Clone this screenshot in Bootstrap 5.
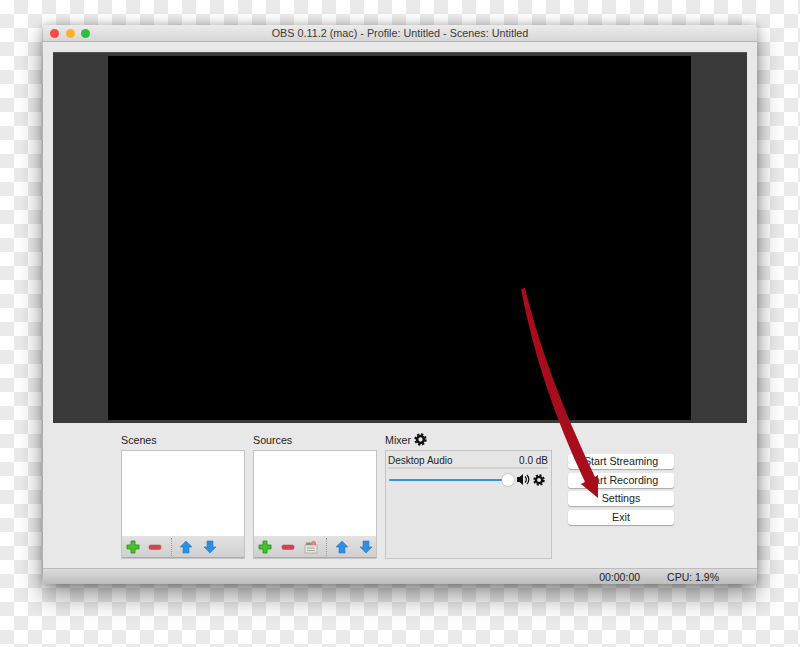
<!DOCTYPE html>
<html lang="en">
<head>
<meta charset="utf-8">
<title>OBS</title>
<link href="https://cdn.jsdelivr.net/npm/bootstrap@5.3.0/dist/css/bootstrap.min.css" rel="stylesheet">
<style>
html,body{height:647px;overflow:hidden}
body{background:repeating-conic-gradient(#eaeaea 0 25%,#fff 0 50%) 0 0/28px 28px;font-family:"Liberation Sans",Arial,sans-serif;font-size:10.7px;color:#222;position:relative}
.obs-wnd{position:relative;margin:25px 0 0 43px;width:714px;height:559px;background:#e8e8e8;box-shadow:0 12px 26px rgba(0,0,0,.42),0 0 8px rgba(0,0,0,.25);border-radius:4px 4px 0 0}
.obs-title{height:17px;background:linear-gradient(#ececec,#d6d6d6);border-bottom:1px solid #b4b4b4;border-radius:4px 4px 0 0;padding:0 0 0 7px}
.obs-title-text{color:#3a3a3a;font-size:10.8px;line-height:16px}
.obs-dot{width:9px;height:9px;border-radius:50%;margin-right:6.5px}
.obs-preview{height:371px;margin:10px 10px 0 10px;background:#3a3a3a;padding:3px 56px 3px 55px;border-top:1px solid #555}
.obs-black{background:#000;height:100%}
.obs-lower{height:145px;padding-left:78px;padding-top:11px}
.obs-col{width:124px;margin-right:8px}
.obs-label{height:16px;line-height:11px;color:#222;padding-top:1px}
.obs-list{height:109px;border:1px solid #c4c4c4;background:#fff}
.obs-tools{height:22px;background:linear-gradient(#e2e2e2,#cfcfcf);border-bottom:1px solid #aaa;padding-left:4px}
.obs-sep{width:0;height:18px;border-left:1px dotted #999}
.obs-tools svg{flex:none}
.obs-g2{margin-left:2px}
.obs-g8{margin-left:8px}
.obs-g9{margin-left:9px}
.obs-g7{margin-left:7px}
.obs-g10{margin-left:10px}
.obs-mixer{width:167px;margin-right:16px}
.obs-mixgear{margin-top:-2px;margin-left:-1px}
.obs-mixbox{height:109px;border:1px solid #c4c4c4;background:#e6e6e6;padding:3px 3px 0 2px;font-size:10px;line-height:13px}
.obs-meter{height:2px;background:#d2d2d2}
.obs-track{height:2px;background:#3d8ee0;border-radius:1px;width:113px;margin-left:1px}
.obs-knob{width:12px;height:12px;border-radius:50%;background:#fff;box-shadow:0 0 2px rgba(0,0,0,.35)}
.obs-slider{margin-top:4px}
.obs-mgear{margin-left:3px}
.obs-btns{width:106px;padding-top:20px;gap:3.4px}
.obs-btn{height:15.2px;background:#fff;border-radius:3px;box-shadow:0 1px 1px rgba(0,0,0,.28);line-height:15px;text-align:center;color:#222}
.obs-status{height:16px;background:linear-gradient(#dcdcdc,#bdbdbd);border-top:1px solid #bcbcbc;color:#222;padding-right:38px;line-height:16px;font-size:10.5px;gap:27px}
.obs-arrow{position:absolute;left:0;top:0;width:800px;height:647px;pointer-events:none}
</style>
</head>
<body>
<svg width="0" height="0" class="d-block position-absolute">
<defs>
<symbol id="i-plus" viewBox="0 0 14 14"><path d="M5 1h4v4h4v4H9v4H5V9H1V5h4z" fill="#46c32a" stroke="#2c8a18" stroke-width=".8"/></symbol>
<symbol id="i-minus" viewBox="0 0 14 14"><rect x="1" y="5" width="12" height="4.4" rx="1.6" fill="#d9424a" stroke="#b5454a" stroke-width=".5"/></symbol>
<symbol id="i-up" viewBox="0 0 14 14"><path d="M7 1l6 6H10v6H4V7H1z" fill="#2f8fe0" stroke="#1f6fb8" stroke-width=".5"/></symbol>
<symbol id="i-down" viewBox="0 0 14 14"><path d="M7 13l6-6H10V1H4v6H1z" fill="#2f8fe0" stroke="#1f6fb8" stroke-width=".5"/></symbol>
<symbol id="i-gear" viewBox="0 0 14 14"><circle cx="7" cy="7" r="3.7" fill="none" stroke="#111" stroke-width="2.8"/><circle cx="7" cy="7" r="5.7" fill="none" stroke="#111" stroke-width="2" stroke-dasharray="2.47 2"/></symbol>
<symbol id="i-clip" viewBox="0 0 14 14"><rect x="1" y="5" width="12" height="8" fill="#e6e2dc" stroke="#a9a39c" stroke-width=".7"/><path d="M3 8h8M3 10.500h8" stroke="#9a9a9a" stroke-width=".8"/><rect x="2" y="2.500" width="10" height="2.500" fill="#8f8a85"/><circle cx="9.500" cy="3" r="2.300" fill="#e38a6a"/></symbol>
</defs>
</svg>
<div class="obs-wnd d-flex flex-column">
  <div class="obs-title d-flex align-items-center position-relative">
    <span class="obs-dot" style="background:#fc4a46"></span>
    <span class="obs-dot" style="background:#fdb22c"></span>
    <span class="obs-dot" style="background:#29c13d"></span>
    <span class="obs-title-text position-absolute top-0 start-50 translate-middle-x text-nowrap">OBS 0.11.2 (mac) - Profile: Untitled - Scenes: Untitled</span>
  </div>
  <div class="obs-preview"><div class="obs-black"></div></div>
  <div class="obs-lower d-flex flex-grow-1">
    <div class="obs-col">
      <div class="obs-label">Scenes</div>
      <div class="obs-list d-flex flex-column">
        <div class="flex-grow-1"></div>
        <div class="obs-tools d-flex align-items-center">
          <svg width="14" height="14"><use href="#i-plus"/></svg>
          <svg width="14" height="14" class="obs-g8"><use href="#i-minus"/></svg>
          <span class="obs-sep obs-g9"></span>
          <svg width="14" height="14" class="obs-g7"><use href="#i-up"/></svg>
          <svg width="14" height="14" class="obs-g10"><use href="#i-down"/></svg>
        </div>
      </div>
    </div>
    <div class="obs-col">
      <div class="obs-label">Sources</div>
      <div class="obs-list d-flex flex-column">
        <div class="flex-grow-1"></div>
        <div class="obs-tools d-flex align-items-center">
          <svg width="14" height="14"><use href="#i-plus"/></svg>
          <svg width="14" height="14" class="obs-g9"><use href="#i-minus"/></svg>
          <svg width="14" height="14" class="obs-g9"><use href="#i-clip"/></svg>
          <span class="obs-sep obs-g8"></span>
          <svg width="14" height="14" class="obs-g8"><use href="#i-up"/></svg>
          <svg width="14" height="14" class="obs-g10"><use href="#i-down"/></svg>
        </div>
      </div>
    </div>
    <div class="obs-mixer">
      <div class="obs-label d-flex align-items-start gap-1">Mixer <svg width="13" height="13" class="obs-mixgear"><use href="#i-gear"/></svg></div>
      <div class="obs-mixbox">
        <div class="d-flex justify-content-between"><span>Desktop Audio</span><span>0.0 dB</span></div>
        <div class="obs-meter"></div>
        <div class="obs-slider d-flex align-items-center">
          <div class="obs-track"></div><div class="obs-knob"></div>
          <svg width="14" height="13" viewBox="0 0 14 13" class="obs-g2"><path d="M1 4h2.500L7 1v11L3.500 9H1z" fill="#111"/><path d="M9 3.500a4 4 0 0 1 0 6M11 2a6.500 6.500 0 0 1 0 9" fill="none" stroke="#111" stroke-width="1.200"/></svg>
          <svg width="12" height="12" class="obs-mgear"><use href="#i-gear"/></svg>
        </div>
      </div>
    </div>
    <div class="obs-btns d-flex flex-column">
      <div class="obs-btn">Start Streaming</div>
      <div class="obs-btn">Start Recording</div>
      <div class="obs-btn">Settings</div>
      <div class="obs-btn">Exit</div>
    </div>
  </div>
  <div class="obs-status d-flex justify-content-end"><span>00:00:00</span><span>CPU: 1.9%</span></div>
</div>
<svg class="obs-arrow" viewBox="0 0 800 647"><path d="M521 289L525 288Q546 375 595 477L598 475L598 498L581 484L585 482Q539 385 521 289z" fill="#a80d1c"/></svg>
</body>
</html>
